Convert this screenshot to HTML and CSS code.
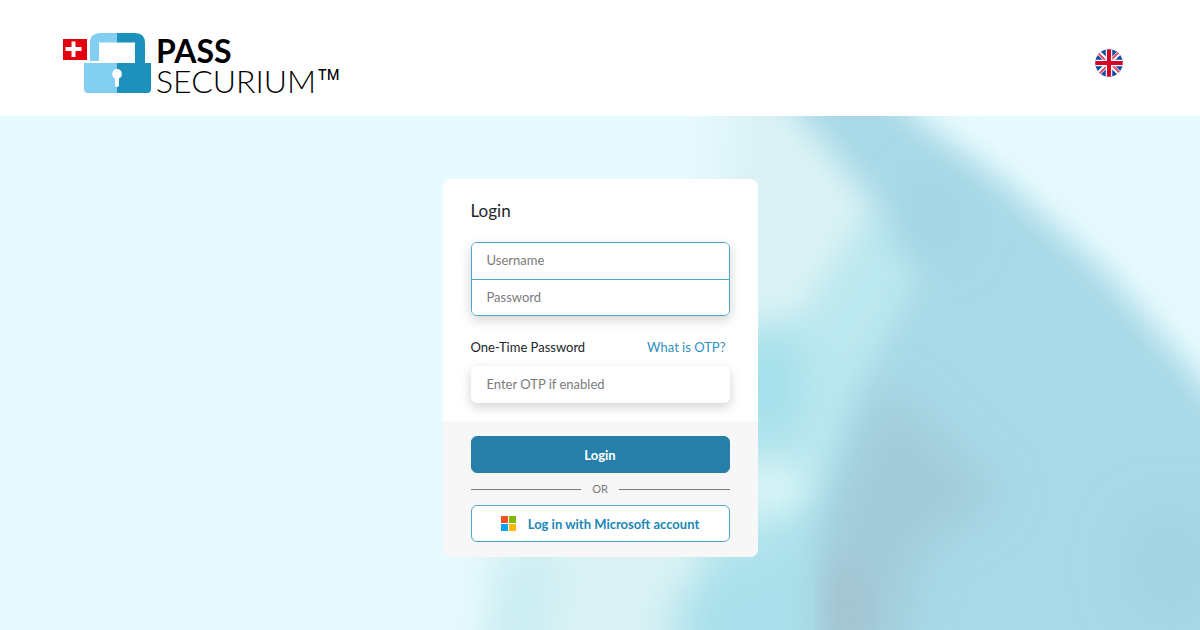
FILE: index.html
```html
<!DOCTYPE html>
<html lang="en">
<head>
<meta charset="utf-8">
<meta name="viewport" content="width=device-width, initial-scale=1">
<title>PASS SECURIUM™ – Login</title>
<link rel="stylesheet" href="styles.css">
</head>
<body>
<header class="header">
  <a class="logo" href="#">
    <svg class="logo-mark" viewBox="0 0 88 62" width="88" height="62" aria-hidden="true">
      <rect x="0" y="7" width="24" height="21" fill="#e3000f"/>
      <path d="M8.500 9.500h4v5.500h6v4h-6v6h-4v-6h-6v-4h6z" fill="#fff"/>
      <path d="M27 29V11Q27 1 37 1H54V10.500H36V29Z" fill="#82cff1"/>
      <path d="M54 1H72Q82 1 82 11V31H72V10.500H54Z" fill="#1c91bd"/>
      <path d="M21 31H54V61H25Q21 61 21 57Z" fill="#82cff1"/>
      <path d="M54 31H88V57Q88 61 84 61H54Z" fill="#1c91bd"/>
      <path d="M54 37a5 5 0 0 1 2 9.500V53a2 2 0 0 1-4 0V46.500A5 5 0 0 1 54 37Z" fill="#fff"/>
    </svg>
    <span class="logo-text">
      <span class="logo-pass">PASS</span>
      <span class="logo-securium">SECURIUM<span class="logo-tm">™</span></span>
    </span>
  </a>
  <button class="language" type="button" aria-label="English">
    <svg viewBox="0 0 28 28" width="28" height="28" aria-hidden="true">
      <defs><clipPath id="flag-circle"><circle cx="14" cy="14" r="13.700"/></clipPath></defs>
      <g clip-path="url(#flag-circle)">
        <rect width="28" height="28" fill="#0b4ea2"/>
        <path d="M0 0 28 28M28 0 0 28" stroke="#fff" stroke-width="4.500"/>
        <path d="M0 1 13 14M28 27 15 14M27 0 14 13M1 28 14 15" stroke="#e8415a" stroke-width="1.800"/>
        <path d="M14 0V28M0 14H28" stroke="#fff" stroke-width="6.500"/>
        <path d="M14 0V28M0 14H28" stroke="#d80027" stroke-width="4"/>
      </g>
    </svg>
  </button>
</header>
<main class="stage">
  <svg class="backdrop" viewBox="0 0 1200 514" preserveAspectRatio="none" aria-hidden="true">
    <defs>
      <filter id="soft" x="-30%" y="-30%" width="160%" height="160%"><feGaussianBlur stdDeviation="15"/></filter>
      <filter id="softer" x="-100%" y="-100%" width="300%" height="300%"><feGaussianBlur stdDeviation="22"/></filter>
    </defs>
    <rect width="1200" height="514" fill="#e7fafe"/>
    <path d="M730-60H900V600H480L500 430 620 300 710 160Z" fill="#daf2f5" filter="url(#softer)"/>
    <path d="M870 90 960 120 920 300 820 600H740L700 400 740 220 800 200Z" fill="#bce8ef" filter="url(#soft)"/>
    <ellipse cx="768" cy="270" rx="36" ry="56" fill="#a3dfea" filter="url(#softer)"/>
    <ellipse cx="768" cy="374" rx="40" ry="26" fill="#d6f4f7" filter="url(#soft)"/>
    <path d="M850 390 760 430 700 455 670 500 700 600H850Z" fill="#a9e0eb" filter="url(#softer)"/>
    <path d="M500 440H560L530 590H490Z" fill="#c8edf3" filter="url(#softer)"/>
    <path d="M750-60H850L920 5 1010 70 1105 155 1180 240 1260 340V600H808L818 430 850 290 920 160 875 90 835 40Z" fill="#a8d9e7" filter="url(#soft)"/>
    <path d="M885 270 1000 380 920 430 890 560H825L830 400Z" fill="#a2cad9" filter="url(#softer)"/>
    <ellipse cx="846" cy="490" rx="20" ry="50" fill="#a4c3d0" filter="url(#soft)"/>
    <ellipse cx="935" cy="100" rx="28" ry="40" fill="#a3d4e3" filter="url(#softer)"/>
    <ellipse cx="1170" cy="450" rx="50" ry="60" fill="#a3d4e2" filter="url(#softer)"/>
  </svg>
  <form class="card" action="#">
    <div class="card-body">
      <h1 class="title">Login</h1>
      <div class="credentials">
        <input class="field" type="text" placeholder="Username" aria-label="Username">
        <input class="field" type="password" placeholder="Password" aria-label="Password">
      </div>
      <div class="otp-head">
        <label for="otp">One-Time Password</label>
        <a class="otp-help" href="#">What is OTP?</a>
      </div>
      <input class="field otp" id="otp" type="text" placeholder="Enter OTP if enabled">
    </div>
    <div class="card-actions">
      <button class="button primary" type="submit">Login</button>
      <div class="divider">OR</div>
      <button class="button secondary" type="button">
        <svg viewBox="0 0 15 15" width="15" height="15" aria-hidden="true">
          <path d="M0 0h7v7H0z" fill="#f25022"/><path d="M8 0h7v7H8z" fill="#7fba00"/>
          <path d="M0 8h7v7H0z" fill="#00a4ef"/><path d="M8 8h7v7H8z" fill="#ffb900"/>
        </svg>
        Log in with Microsoft account
      </button>
    </div>
  </form>
</main>
</body>
</html>
```
FILE: styles.css
```css
* {
  box-sizing: border-box;
}

body {
  margin: 0;
  min-height: 100vh;
  display: flex;
  flex-direction: column;
  font-family: Lato, "Liberation Sans", sans-serif;
  font-size: 13px;
  color: #212529;
}

.header {
  display: flex;
  align-items: center;
  justify-content: space-between;
  padding: 32px 77px 20px 63px;
  background: #fff;
}

.logo {
  display: flex;
  gap: 5px;
  color: #000;
  text-decoration: none;
}

.logo-text {
  display: flex;
  flex-direction: column;
  padding-top: 4px;
}

.logo-pass,
.logo-securium {
  font-size: 32px;
  line-height: 30px;
}

.logo-pass {
  font-weight: 700;
}

.logo-securium {
  display: flex;
  align-items: flex-start;
  height: 30px;
  font-weight: 300;
}

.logo-tm {
  font-family: Roboto, "Liberation Sans", sans-serif;
  font-size: 42px;
  line-height: 38px;
  font-weight: 300;
}

.language {
  display: flex;
  padding: 0 0 2px;
  border: 0;
  background: none;
}

.stage {
  position: relative;
  flex: 1;
  display: flex;
  align-items: flex-start;
  justify-content: center;
  padding: 63px 16px;
  overflow: hidden;
  background: #e7fafe;
}

.backdrop {
  position: absolute;
  inset: 0;
  width: 100%;
  height: 100%;
}

.card {
  position: relative;
  width: 100%;
  max-width: 315px;
  border-radius: 8px;
  overflow: hidden;
  background: #fff;
}

.card-body {
  padding: 22px 28px 18px;
}

.title {
  margin: 0 0 21px;
  font-size: 17px;
  line-height: 20px;
  font-weight: 400;
}

.credentials {
  border: 1px solid #4ba7cb;
  border-radius: 6px;
  overflow: hidden;
  box-shadow: 0 4px 12px rgba(0, 0, 0, 0.18);
}

.field {
  display: block;
  width: 100%;
  height: 36px;
  padding: 0 15px 2px;
  border: 0;
  background: #fff;
  font: inherit;
  color: #212529;
}

.field::placeholder {
  color: #7b7b7b;
  opacity: 1;
}

.field + .field {
  border-top: 1px solid #4ba7cb;
}

.otp-head {
  display: flex;
  justify-content: space-between;
  padding: 21px 4px 9px 0;
  line-height: 20px;
}

.otp-help {
  color: #2f8fbd;
  text-decoration: none;
}

.otp {
  height: 37px;
  padding: 0 16px 1px;
  border-radius: 6px;
  box-shadow: 0 4px 12px rgba(0, 0, 0, 0.18);
}

.card-actions {
  padding: 15px 28px;
  background: #f7f7f7;
}

.button {
  display: flex;
  align-items: center;
  justify-content: center;
  gap: 12px;
  width: 100%;
  height: 37px;
  border: 1px solid #4ba7cb;
  border-radius: 6px;
  font: inherit;
  font-weight: 700;
}

.primary {
  border-color: #267fa8;
  background: #267fa8;
  color: #fff;
}

.secondary {
  background: #fff;
  color: #1b87b5;
}

.divider {
  display: flex;
  align-items: center;
  gap: 11px;
  font-size: 11px;
  line-height: 32px;
  color: #7b7b7b;
}

.divider::before,
.divider::after {
  content: "";
  flex: 1;
  height: 1px;
  background: #7b7b7b;
}
```
